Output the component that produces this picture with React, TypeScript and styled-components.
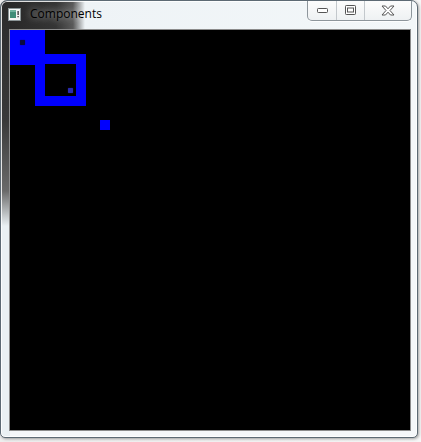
import styled, { createGlobalStyle } from 'styled-components';

const GlobalStyle = createGlobalStyle`
	html, body {
		margin: 0;
		padding: 0;
		background: #e9e9e9;
	}
	body {
		font-family: 'Open Sans', 'DejaVu Sans', sans-serif;
	}
`;

const Desktop = styled.div`
	width: 421px;
	height: 442px;
	background: linear-gradient(to right, #eeeeee 0, #f6f6f6 100%);
	overflow: hidden;
`;

const Window = styled.div`
	box-sizing: border-box;
	width: 418px;
	height: 438px;
	display: flex;
	flex-direction: column;
	border: 1px solid #5d6a74;
	border-radius: 7px 7px 5px 5px;
	box-shadow: 1px 1px 3px rgba(0, 0, 0, 0.35), inset 0 0 0 1px rgba(255, 255, 255, 0.85);
	background:
		linear-gradient(to bottom, #2b2b2b 0, #3a3a3a 120px, #6a6a6a 190px, #eaf0f3 225px) left top / 9px 100% no-repeat,
		linear-gradient(to right, #262626 0, #353535 55px, #5a5a5a 72px, #eef3f6 84px, #f3f7f9 100%) left top / 100% 29px no-repeat,
		#f5f7f9;
	overflow: hidden;
`;

const TitleBar = styled.div`
	height: 28px;
	display: flex;
	align-items: flex-start;
	flex-shrink: 0;
`;

const AppIcon = styled.svg`
	margin: 7px 0 0 7px;
	flex-shrink: 0;
`;

const Title = styled.span`
	margin: 5px 0 0 9px;
	font-size: 12px;
	line-height: 16px;
	color: #000;
	text-shadow: 0 0 6px rgba(255, 255, 255, 0.55), 0 0 12px rgba(255, 255, 255, 0.35);
`;

const Controls = styled.div`
	margin-left: auto;
	margin-right: 5px;
	margin-top: -1px;
	display: flex;
	height: 20px;
	border: 1px solid #8e969c;
	border-top: none;
	border-radius: 0 0 5px 5px;
	background: linear-gradient(to bottom, #fdfdfd, #eef1f3);
	box-shadow: 0 1px 0 rgba(255, 255, 255, 0.8);
`;

const CtrlButton = styled.div<{ w: number; divider?: boolean }>`
	width: ${(p) => p.w}px;
	height: 100%;
	display: flex;
	align-items: center;
	justify-content: center;
	border-left: ${(p) => (p.divider ? '1px solid #c3c8cc' : 'none')};
`;

const Body = styled.div`
	flex: 1;
	padding: 0 6px 6px 8px;
	display: flex;
`;

const Client = styled.div`
	position: relative;
	width: 400px;
	height: 400px;
	background: #000;
	border: 1px solid #8c8c8c;
	overflow: hidden;
`;

const Block = styled.div<{ x: number; y: number; w: number; h: number; ring?: number }>`
	position: absolute;
	box-sizing: border-box;
	left: ${(p) => p.x}px;
	top: ${(p) => p.y}px;
	width: ${(p) => p.w}px;
	height: ${(p) => p.h}px;
	background: ${(p) => (p.ring ? 'transparent' : '#0000ff')};
	border: ${(p) => (p.ring ? `${p.ring}px solid #0000ff` : 'none')};
`;

const Dot = styled.div<{ x: number; y: number; tone: string }>`
	position: absolute;
	left: ${(p) => p.x}px;
	top: ${(p) => p.y}px;
	width: 5px;
	height: 5px;
	border-radius: 1px;
	background: ${(p) => p.tone};
	box-shadow: 0 0 1px ${(p) => p.tone};
`;

const App = () => {
	return (
		<>
			<GlobalStyle />
			<Desktop>
				<Window>
					<TitleBar>
						<AppIcon width='13' height='13' viewBox='0 0 13 13'>
							<rect x='0.5' y='0.5' width='12' height='12' fill='#f4f6f6' stroke='#8a9496' />
							<rect x='2' y='2' width='6' height='8' fill='#3f8d78' />
							<rect x='2' y='2' width='6' height='2' fill='#6fb3a0' />
							<rect x='9.5' y='3' width='1.2' height='4' fill='#222' />
							<rect x='9.5' y='8' width='1.2' height='1.3' fill='#222' />
						</AppIcon>
						<Title>Components</Title>
						<Controls>
							<CtrlButton w={28}>
								<svg width='11' height='6' viewBox='0 0 11 6'>
									<rect x='0.5' y='1.5' width='10' height='4' rx='0.8' fill='#fff' stroke='#555' />
								</svg>
							</CtrlButton>
							<CtrlButton w={27} divider>
								<svg width='11' height='10' viewBox='0 0 11 10'>
									<rect x='0.5' y='0.5' width='10' height='9' rx='0.8' fill='#fff' stroke='#555' />
									<rect x='2.5' y='3' width='6' height='4' fill='none' stroke='#555' />
								</svg>
							</CtrlButton>
							<CtrlButton w={46} divider>
								<svg width='14' height='11' viewBox='0 0 14 11'>
									<path
										d='M1 1 H4.5 L7 3.8 L9.5 1 H13 L9 5.5 L13 10 H9.5 L7 7.2 L4.5 10 H1 L5 5.5 Z'
										fill='#fff'
										stroke='#555'
										strokeWidth='1'
										strokeLinejoin='round'
									/>
								</svg>
							</CtrlButton>
						</Controls>
					</TitleBar>
					<Body>
						<Client>
							<Block x={0} y={0} w={35} h={35} />
							<Block x={25} y={24} w={51} h={52} ring={10} />
							<Block x={90} y={90} w={10} h={10} />
							<Dot x={10} y={10} tone='#0a0a40' />
							<Dot x={58} y={58} tone='#2a2ab0' />
						</Client>
					</Body>
				</Window>
			</Desktop>
		</>
	);
};

export default App;
